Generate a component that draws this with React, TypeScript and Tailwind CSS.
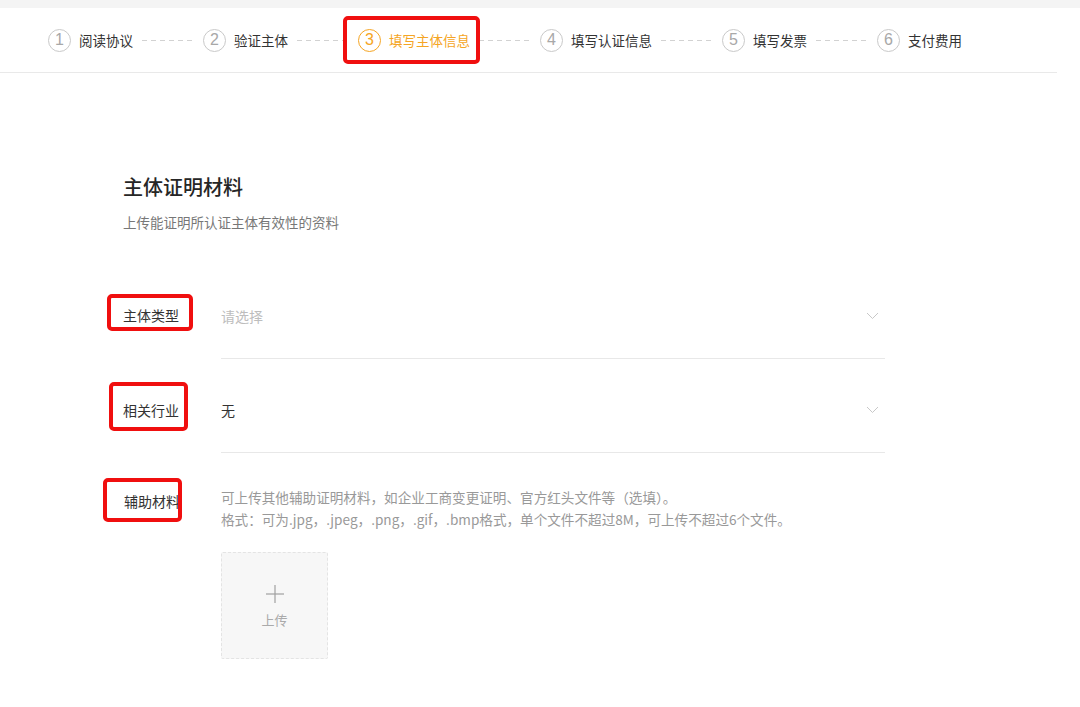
import React from 'react';

const steps = ['阅读协议', '验证主体', '填写主体信息', '填写认证信息', '填写发票', '支付费用'];
const ACTIVE = 2;

function Dashes() {
  return (
    <div className="flex items-center gap-[4px] mr-[8px] ml-[9px] w-[53px]">
      {[0, 1, 2, 3, 4, 5].map((i) => (
        <span key={i} className="block w-[5px] h-px bg-[#d2d2d2]" />
      ))}
    </div>
  );
}

function Step({ index, label }: { index: number; label: string }) {
  const active = index === ACTIVE;
  return (
    <div className="relative flex items-center h-[21px]">
      <span
        className={
          active
            ? 'flex items-center justify-center w-[23px] h-[23px] rounded-full border border-[#f5a524] text-[#f5a524] text-[16px] font-light leading-none'
            : 'flex items-center justify-center w-[23px] h-[23px] rounded-full border border-[#c9c9c9] text-[#a8a8a8] text-[16px] font-light leading-none'
        }
        style={{ fontFamily: '"Liberation Sans", Arial, sans-serif' }}
      >
        {index + 1}
      </span>
      <span className={active ? 'ml-[8px] text-[13.5px] leading-[21px] text-[#f5a524]' : 'ml-[8px] text-[13.5px] leading-[21px] text-[#333]'}>
        {label}
      </span>
      {active && (
        <span className="absolute left-[-15px] right-[-10px] top-[-14px] bottom-[-13px] border-[4px] border-[#f00f0f] rounded-[5px]" />
      )}
    </div>
  );
}

function Chevron() {
  return (
    <svg width="13" height="8" viewBox="0 0 13 8" fill="none">
      <polyline points="1,1 6.5,6.5 12,1" stroke="#c8c8c8" strokeWidth="1" />
    </svg>
  );
}

function Label({ text, box }: { text: string; box: string }) {
  return (
    <span className="relative block text-[14px] leading-[20px] text-[#333]">
      {text}
      <span className={'absolute border-[4px] border-[#f00f0f] rounded-[5px] ' + box} />
    </span>
  );
}

export default function App() {
  return (
    <div
      className="min-h-screen bg-white"
      style={{ fontFamily: '"Noto Sans CJK SC", "Noto Sans", sans-serif' }}
    >
      <div className="h-2 bg-[#f4f4f4]" />
      <div className="w-[1057px] h-[65px] border-b border-[#e9e9e9] flex items-center pl-12">
        {steps.map((s, i) => (
          <React.Fragment key={s}>
            <Step index={i} label={s} />
            {i < steps.length - 1 && <Dashes />}
          </React.Fragment>
        ))}
      </div>

      <div className="pl-[123px] pt-[100px]">
        <h2 className="text-[20px] leading-[28px] font-medium text-[#262626]">主体证明材料</h2>
        <p className="mt-[11px] text-[13.5px] leading-[20px] text-[#777]">上传能证明所认证主体有效性的资料</p>

        <div className="mt-[33px] w-[762px]">
          <div className="flex">
            <div className="w-[98px] pt-[40px] flex items-start">
              <Label text="主体类型" box="left-[-16px] right-[-14px] top-[-11px] bottom-[-6px]" />
            </div>
            <div className="flex-1 flex items-center justify-between pt-[41px] pb-[32px] pr-[6px] border-b border-[#e8e8e8] leading-[20px]">
              <span className="text-[14px] text-[#bdbdbd]">请选择</span>
              <Chevron />
            </div>
          </div>

          <div className="flex">
            <div className="w-[98px] pt-[41px] flex items-start">
              <Label text="相关行业" box="left-[-14px] right-[-9px] top-[-18px] bottom-[-11px]" />
            </div>
            <div className="flex-1 flex items-center justify-between pt-[41px] pb-[32px] pr-[6px] border-b border-[#e8e8e8] leading-[20px]">
              <span className="text-[14px] text-[#333]">无</span>
              <Chevron />
            </div>
          </div>

          <div className="flex">
            <div className="w-[98px] pt-[38px] pl-px flex items-start">
              <Label text="辅助材料" box="left-[-21px] right-[-2px] top-[-13px] bottom-[-11px]" />
            </div>
            <div className="flex-1 pt-[33px]">
              <p className="text-[13.6px] leading-[22px] text-[#999]">
                可上传其他辅助证明材料，如企业工商变更证明、官方红头文件等（选填）。
              </p>
              <p className="text-[13.6px] leading-[22px] text-[#999]">
                格式：可为.jpg，.jpeg，.png，.gif，.bmp格式，单个文件不超过8M，可上传不超过6个文件。
              </p>
              <div className="mt-[22px] w-[107px] h-[107px] bg-[#f7f7f7] border border-dashed border-[#e4e4e4] rounded-[2px] flex flex-col items-center justify-center">
                <svg width="18" height="18" viewBox="0 0 18 18" className="mt-[2px]">
                  <line x1="9" y1="0" x2="9" y2="18" stroke="#a0a0a0" strokeWidth="1.2" />
                  <line x1="0" y1="9" x2="18" y2="9" stroke="#a0a0a0" strokeWidth="1.2" />
                </svg>
                <span className="mt-[8px] text-[13px] leading-[18px] text-[#aaa]">上传</span>
              </div>
            </div>
          </div>
        </div>
      </div>
    </div>
  );
}
